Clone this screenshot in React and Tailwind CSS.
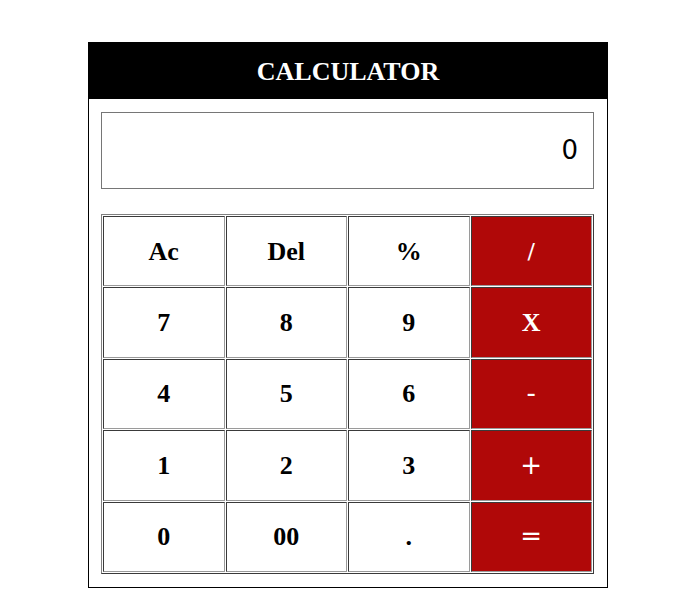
const rows = [
  ['Ac', 'Del', '%', '/'],
  ['7', '8', '9', 'X'],
  ['4', '5', '6', '-'],
  ['1', '2', '3', '+'],
  ['0', '00', '.', '='],
];

const serif = "font-['Liberation_Serif','Times_New_Roman',serif]";

export default function App() {
  return (
    <div className="min-h-screen bg-white pt-[42px] pl-[88px]">
      <div className="w-[520px] border border-black">
        <div className="flex h-[56px] items-center justify-center bg-black">
          <h1 className={`${serif} text-[26px] font-bold text-white`}>CALCULATOR</h1>
        </div>

        <div className="px-[12px] pt-[13px] pb-[13px]">
          {/* display */}
          <div className="flex h-[77px] w-[493px] items-center justify-end border border-[#767676] pr-[15px] font-['DejaVu_Sans',sans-serif] text-[26px] text-black">
            0
          </div>

          <table className="mt-[25px] w-[493px] table-fixed border-separate border-spacing-[1px] border border-t-[#808080] border-l-[#808080] border-r-[#3a3a3a] border-b-[#3a3a3a]">
            <tbody>
              {rows.map((row, i) => (
                <tr key={i}>
                  {row.map((key, j) => {
                    const isOp = j === 3;
                    let font = `${serif} font-bold text-[26px]`;
                    if (isOp && key === '/') font = "font-['DejaVu_Sans',sans-serif] font-normal text-[22px]";
                    else if (isOp && key !== 'X') font = "font-['DejaVu_Sans',sans-serif] font-normal text-[26px]";
                    return (
                      <td
                        key={key}
                        className={`h-[70.4px] border border-t-[#3a3a3a] border-l-[#3a3a3a] border-r-[#9a9a9a] border-b-[#9a9a9a] p-0 text-center align-middle ${font} ${
                          isOp ? 'bg-[#b00808] text-white' : 'bg-white text-black'
                        }`}
                      >
                        {key}
                      </td>
                    );
                  })}
                </tr>
              ))}
            </tbody>
          </table>
        </div>
      </div>
    </div>
  );
}
